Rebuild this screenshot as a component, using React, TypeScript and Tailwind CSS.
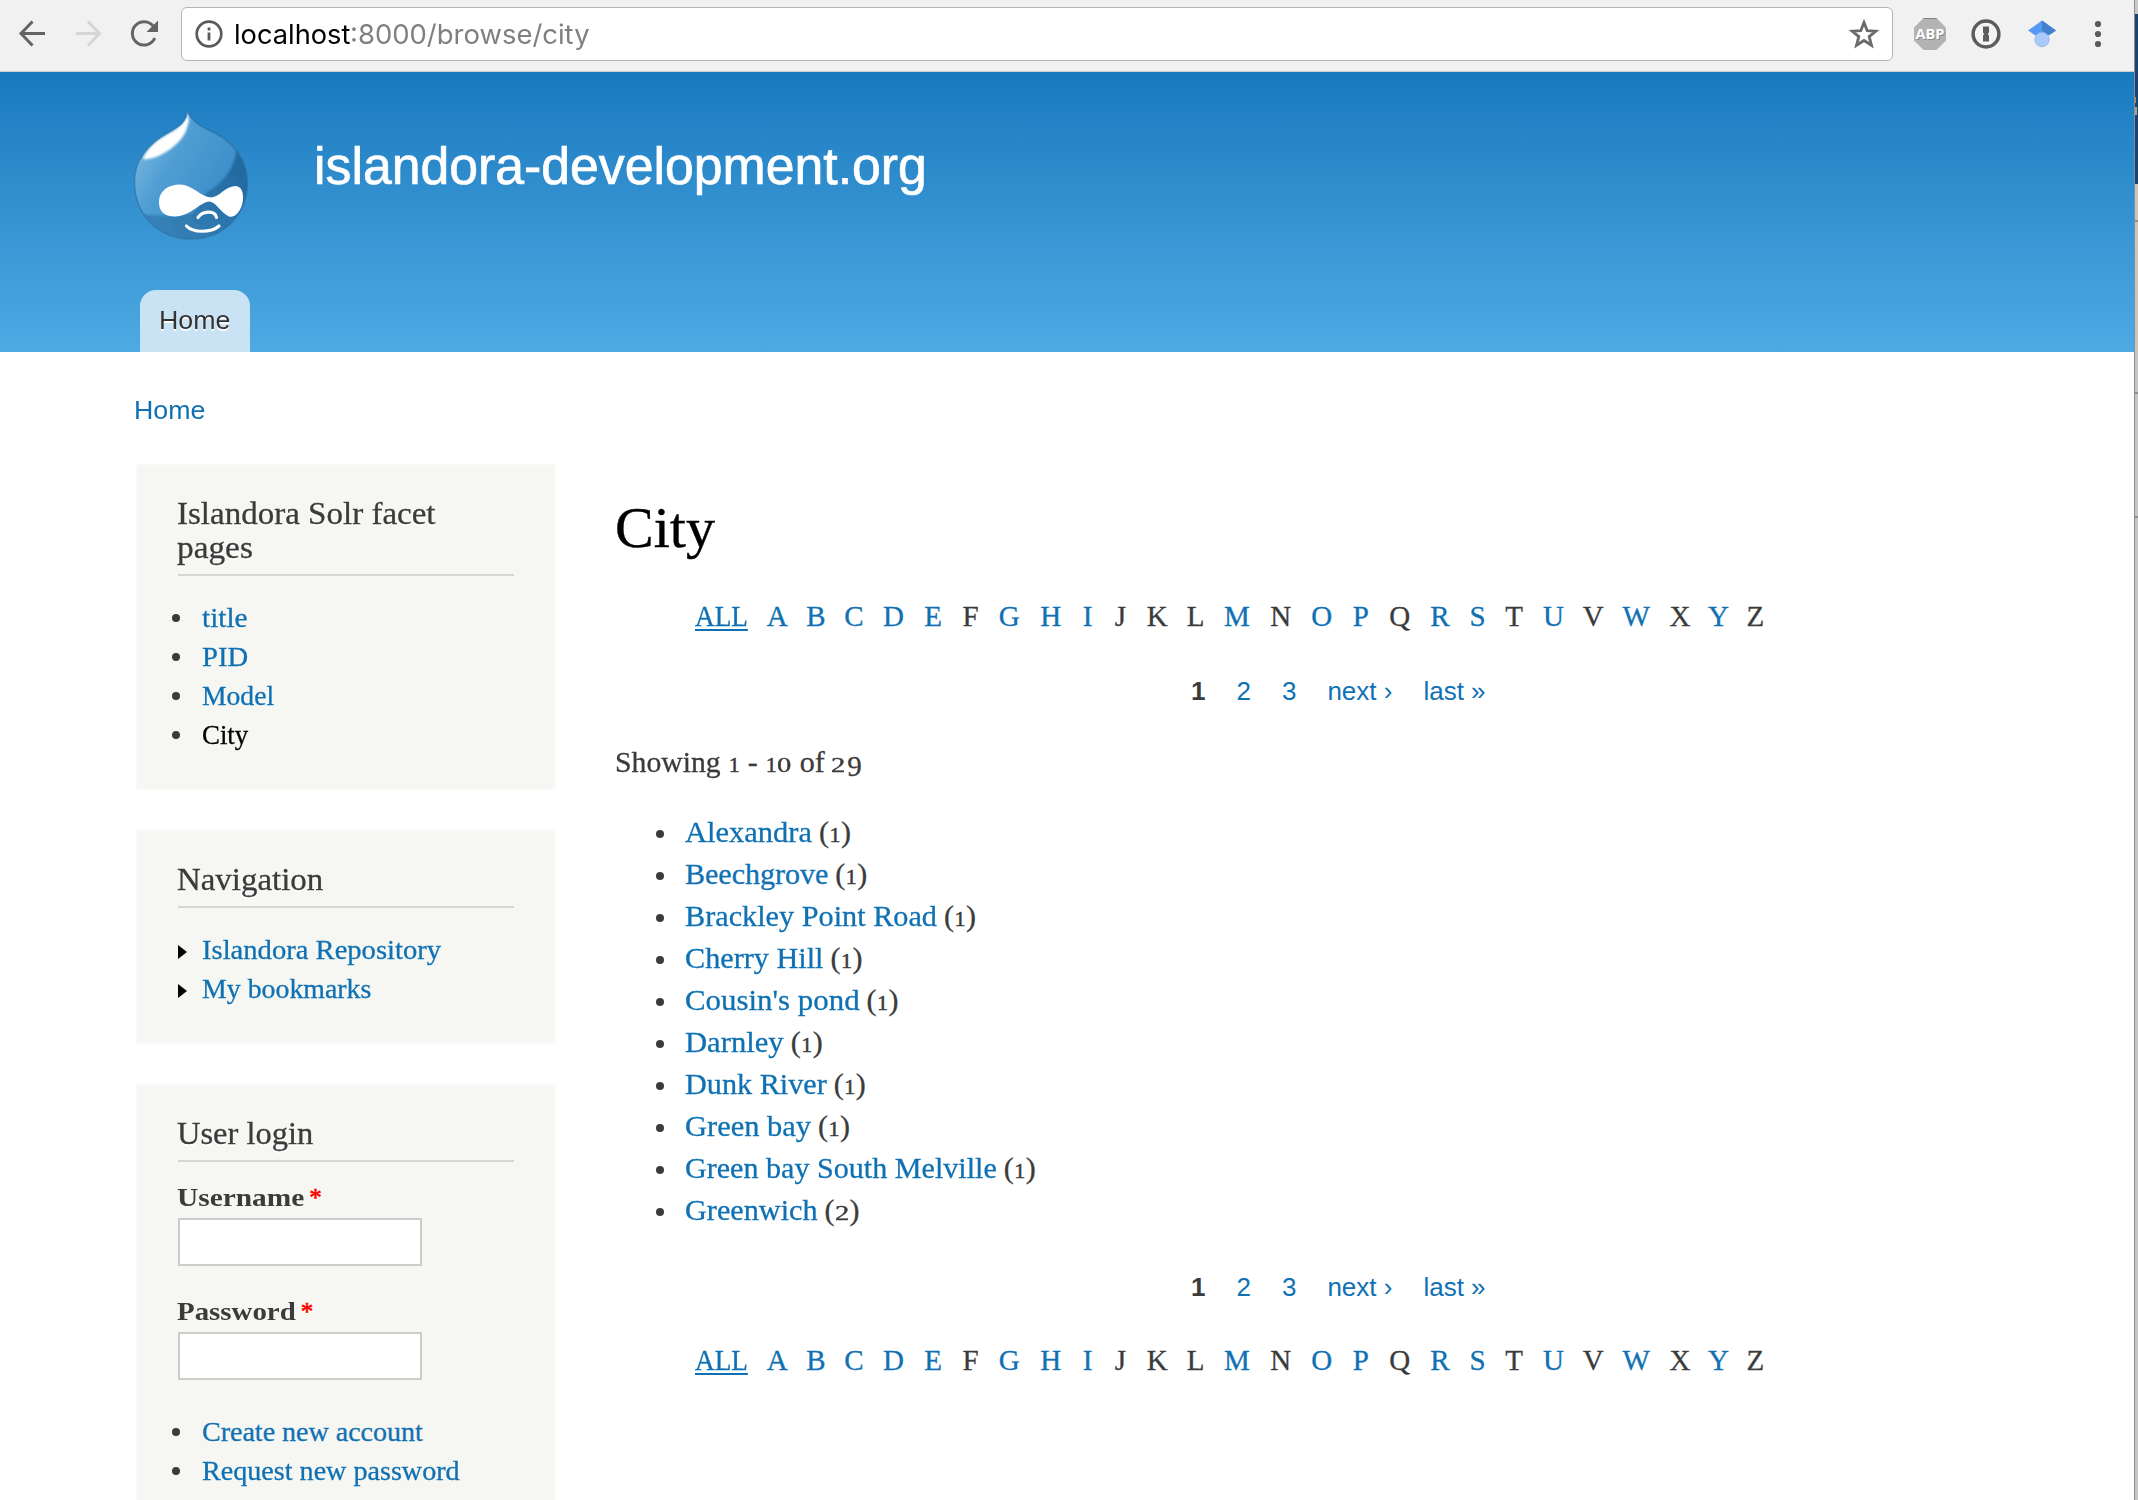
import React, { useLayoutEffect, useRef } from "react";

const SERIF = "font-['Liberation_Serif',serif]";
const SANS = "font-['Liberation_Sans',sans-serif]";

/** One line of text, stretched so that it fills the given width. */
function Fit({ text, width, className = "" }: { text: string; width: number; className?: string }) {
  const ref = useRef<HTMLSpanElement>(null);
  useLayoutEffect(() => {
    const el = ref.current;
    if (!el) return;
    const natural = el.offsetWidth;
    el.style.transform = `scaleX(${width / natural})`;
    el.style.marginRight = `${width - natural}px`;
  }, [text, width]);
  return (
    <span ref={ref} className={`inline-block shrink-0 origin-left whitespace-nowrap ${className}`}>
      {text}
    </span>
  );
}

/** Old-style numerals: 0-2 at x-height, the others hanging below the baseline. */
function Num({ value }: { value: string }) {
  return (
    <>
      {value.split("").map((d, i) =>
        "012".includes(d) ? (
          <span
            key={i}
            className={
              d === "1"
                ? "inline-block w-[12px] text-center text-[22px] leading-none [-webkit-text-stroke:0.5px_currentColor]"
                : "inline-block w-[15px] origin-left scale-x-[1.3] text-[22px] leading-none [-webkit-text-stroke:0.4px_currentColor]"
            }
          >
            {d}
          </span>
        ) : (
          <span key={i} className="relative top-[4px] ml-px text-[29px] leading-none">
            {d}
          </span>
        ),
      )}
    </>
  );
}

function Toolbar() {
  return (
    <div className="flex h-[72px] shrink-0 items-start border-b border-[#cfcfcf] bg-[#f1f1f1]">
      <svg className="h-[70px] w-[181px] shrink-0" viewBox="0 0 181 70" fill="none">
        <g stroke="#646464" strokeWidth="3">
          <path d="M45 33.5H21.5M32.5 21.5L21 33.5L32.5 45.5" />
          <path d="M76 33.5h23.5M88 21.5L99.500 33.5L88 45.5" stroke="#d6d6d6" />
          <path d="M153.300 26.200A11.700 11.700 0 1 0 154.800 38" />
        </g>
        <path d="M158 20.500V32H146.500Z" fill="#646464" />
      </svg>
      <div className="mt-[7px] flex h-[54px] w-[1712px] shrink-0 items-center rounded-[6px] border border-[#b4b4b4] bg-white">
        <svg className="ml-[13px] h-[28px] w-[28px]" viewBox="0 0 28 28" fill="none">
          <circle cx="14" cy="14" r="12.300" stroke="#5a5a5a" strokeWidth="2.700" />
          <path d="M12.600 12.500h2.800v8h-2.800zM12.600 7.500h2.800v3h-2.800z" fill="#5a5a5a" />
        </svg>
        <div className="mt-[2px] ml-[11px] flex text-[27px] leading-[40px] font-['Inter',sans-serif]">
          <Fit text="localhost" width={116} className="text-black" />
          <Fit text=":8000/browse/city" width={240} className="text-[#808080]" />
        </div>
        <svg className="mr-[12px] ml-auto h-[32px] w-[32px]" viewBox="0 0 32 32" fill="none">
          <path
            d="M16 4.500L19.200 12.700L27.800 13.200L21.200 18.600L23.500 27.300L16 22.500L8.500 27.300L10.800 18.600L4.200 13.200L12.800 12.700Z"
            stroke="#6a6a6a"
            strokeWidth="2.800"
          />
        </svg>
      </div>
      <div className="flex h-[68px] flex-1 items-center">
        <div className="relative ml-[21px] flex h-[32px] w-[32px] items-center justify-center">
          <svg className="absolute inset-0 h-[32px] w-[32px]" viewBox="0 0 32 32">
            <path d="M9.500 0h13L32 9.500v13L22.500 32h-13L0 22.500v-13Z" fill="#b3b3b3" />
            <path d="M9.500 .5h13" stroke="#858585" />
          </svg>
          <span className="relative text-[14.5px] leading-[24px] font-bold text-white [text-shadow:1px_1px_0_#8a8a8a] font-['Open_Sans',sans-serif]">
            ABP
          </span>
        </div>
        <svg className="ml-[25px] h-[30px] w-[30px]" viewBox="0 0 30 30">
          <circle cx="15" cy="15" r="12.900" fill="#f4f4f4" stroke="#5c5c5c" strokeWidth="3.500" />
          <path d="M12 7.500h6v6l-1.200 1.500L18 16.500v6h-6v-6l1.200-1.500L12 13.500Z" fill="#5c5c5c" />
        </svg>
        <svg className="ml-[27px] h-[28px] w-[28px]" viewBox="0 0 28 28">
          <path d="M14 .5L0 10.500L7 15.200h14L28 10.500Z" fill="#5599f2" />
          <path d="M14 .5L28 10.500L21 15.200L14 11Z" fill="#4480cc" />
          <circle cx="14" cy="19.500" r="7.200" fill="#a9cbfb" stroke="#86aeea" strokeWidth=".8" />
        </svg>
        <svg className="ml-[38px] h-[28px] w-[8px]" viewBox="0 0 8 28" fill="#5a5a5a">
          <circle cx="4" cy="4" r="3.100" />
          <circle cx="4" cy="14" r="3.100" />
          <circle cx="4" cy="24" r="3.100" />
        </svg>
      </div>
    </div>
  );
}

function Druplicon() {
  return (
    <svg className="h-[132px] w-[116px]" viewBox="0 0 116 132">
      <defs>
        <linearGradient id="drop" x1="0.1" y1="0.3" x2="0.7" y2="0.7">
          <stop offset="0" stopColor="#6fb2dd" />
          <stop offset="0.35" stopColor="#4f9dd3" />
          <stop offset="1" stopColor="#3d8fca" />
        </linearGradient>
        <linearGradient id="shade" x1="0" y1="1" x2="1" y2="0.2">
          <stop offset="0" stopColor="#3a87bd" />
          <stop offset="1" stopColor="#21689f" />
        </linearGradient>
        <filter id="soft" x="-20%" y="-20%" width="140%" height="140%">
          <feGaussianBlur stdDeviation="1" />
        </filter>
        <clipPath id="dropClip">
          <path d="M54.500 1.500C57 10 64 15.500 74 20.500C99 30 114.500 50 114.500 74C114.500 107 89 130 58 130C27 130 1.500 107 1.500 73C1.500 49 16 34 36 23C47 17 53 13 54.500 1.500Z" />
        </clipPath>
      </defs>
      <g clipPath="url(#dropClip)">
        <rect width="116" height="132" fill="url(#drop)" />
        <path d="M104 38C102 60 90 74 74 83L60 104C40 108 22 107 8 105L20 132H116V38Z" fill="url(#shade)" filter="url(#soft)" />
        <path d="M54 0C55 11 49 17 37 24C22 32 14 40 10 50C22 52 46 38 53 22L56 12Z" fill="#fff" filter="url(#soft)" />
      </g>
      <path
        d="M54.500 1.500C57 10 64 15.500 74 20.500C99 30 114.500 50 114.500 74C114.500 107 89 130 58 130C27 130 1.500 107 1.500 73C1.500 49 16 34 36 23C47 17 53 13 54.500 1.500Z"
        fill="none"
        stroke="#2c70a3"
        strokeOpacity=".65"
        strokeWidth="1.500"
      />
      <path
        d="M47 75.500C59 75.500 68 88 78 88.500C87 88 92 77 103 77C110 77.500 111.500 88 109 96C106.500 104 101 109 96 107.500C88 104 83 93 76.500 92.500C67 93 58 107 42 107.500C31 107.500 25.500 102 26 92C26.500 82 35 75.500 47 75.500Z"
        fill="#fff"
      />
      <g fill="none" stroke="#fff" strokeWidth="3.200" strokeLinecap="round">
        <path d="M65 108.500C69 102 82 100.500 83.500 108.500" />
        <path d="M53.500 117C60 124 78 124 86 117" />
      </g>
    </svg>
  );
}

function Header() {
  return (
    <header className="flex h-[280px] shrink-0 flex-col justify-between bg-linear-to-b from-[#177abf] to-[#4eaae3]">
      <div className="flex pt-[37px] pl-[133px]">
        <Druplicon />
        <div className={`mt-[28px] ml-[65px] text-[51px] leading-[60px] text-white ${SANS}`}>
          <Fit text="islandora-development.org" width={613} className="[-webkit-text-stroke:0.7px_white]" />
        </div>
      </div>
      <nav className="pl-[140px]">
        <div
          className={`flex h-[62px] w-[110px] justify-center rounded-t-[16px] bg-[#c9e3f5] pt-[10px] text-[26px] leading-[40px] text-[#333] [text-shadow:0_2px_1px_#fff] ${SANS}`}
        >
          <Fit text="Home" width={71} />
        </div>
      </nav>
    </header>
  );
}

function Block({ title, className, children }: { title: [string, number][]; className: string; children: React.ReactNode }) {
  return (
    <section className={`w-[420px] shrink-0 border-2 border-[#f9f9f9] bg-[#f6f6f2] px-[40px] pt-[30px] ${className}`}>
      <h2 className="flex flex-col border-b-2 border-[#d6d6d6] pb-[10px] text-[32px] leading-[34px] [-webkit-text-stroke:0.3px_currentColor] [text-shadow:0_2px_0_#fff]">
        {title.map(([t, w]) => (
          <Fit key={t} text={t} width={w} className="-ml-px self-start" />
        ))}
      </h2>
      {children}
    </section>
  );
}

function Links({ items, arrow = false, className }: { items: [string, number][]; arrow?: boolean; className: string }) {
  return (
    <ul className={`text-[28px] leading-[39px] [-webkit-text-stroke:0.3px_currentColor] ${className}`}>
      {items.map(([t, w]) => (
        <li key={t} className="flex h-[39px] items-center">
          {arrow ? (
            <svg className="mt-[5px] mr-[15px] h-[14px] w-[9px] text-black" viewBox="0 0 9 14">
              <path d="M0 0L9 7L0 14Z" />
            </svg>
          ) : (
            <span className="mr-[22px] -ml-[6px] h-[8px] w-[8px] rounded-full bg-[#3b3b3b]" />
          )}
          <Fit text={t} width={w} className={t === "City" ? "text-black" : "text-[#0f71b3]"} />
        </li>
      ))}
    </ul>
  );
}

function Field({ label, width, className }: { label: string; width: number; className: string }) {
  return (
    <div className={className}>
      <label className="flex text-[25px] leading-[30px] font-bold">
        <Fit text={label} width={width} className="-ml-px" />
        <span className="ml-[5px] font-normal text-[#f00] [-webkit-text-stroke:0.6px_#f00]">*</span>
      </label>
      <div className="mt-[5px] h-[48px] w-[244px] border-2 border-[#ccc] bg-white" />
    </div>
  );
}

function Sidebar() {
  return (
    <aside className="flex w-[420px] flex-col gap-[40px]">
      <Block title={[["Islandora Solr facet", 259], ["pages", 76]]} className="h-[326px]">
        <Links className="mt-[22px]" items={[["title", 46], ["PID", 46], ["Model", 72], ["City", 46]]} />
      </Block>
      <Block title={[["Navigation", 146]]} className="h-[214px]">
        <Links arrow className="mt-[22px]" items={[["Islandora Repository", 239], ["My bookmarks", 169]]} />
      </Block>
      <Block title={[["User login", 136]]} className="h-[460px]">
        <Field label="Username" width={127} className="mt-[21px]" />
        <Field label="Password" width={119} className="mt-[31px]" />
        <Links className="mt-[32px]" items={[["Create new account", 221], ["Request new password", 258]]} />
      </Block>
    </aside>
  );
}

/* Letter, cell width, linked. */
const LETTERS: [string, number, boolean][] = [
  ["A", 18.8, true], ["B", 18.3, true], ["C", 18, true], ["D", 21, true], ["E", 18.3, true],
  ["F", 16.8, false], ["G", 20.3, true], ["H", 22.8, true], ["I", 10.9, true], ["J", 14.5, false],
  ["K", 19.5, false], ["L", 16.9, false], ["M", 26, true], ["N", 21.5, false], ["O", 20.8, true],
  ["P", 17.1, true], ["Q", 20.8, false], ["R", 19.7, true], ["S", 15.7, true], ["T", 17.3, false],
  ["U", 21.2, true], ["V", 18.6, false], ["W", 27.4, true], ["X", 19.9, false], ["Y", 17.2, true],
  ["Z", 16.8, false],
];

function Alphabet({ className }: { className: string }) {
  return (
    <div
      className={`flex gap-[20px] pl-[80px] text-[29px] leading-[40px] [-webkit-text-stroke:0.3px_currentColor] ${className}`}
    >
      <Fit
        text="ALL"
        width={52.5}
        className="text-[#0f71b3] underline decoration-2 underline-offset-[3px] [text-decoration-skip-ink:none]"
      />
      {LETTERS.map(([l, w, link]) => (
        <span key={l} style={{ width: w }} className={`flex justify-center ${link ? "text-[#0f71b3]" : ""}`}>
          {l}
        </span>
      ))}
    </div>
  );
}

function Pager({ className }: { className: string }) {
  return (
    <div className={`flex gap-[31px] pl-[576px] text-[26px] leading-[40px] text-[#0f71b3] ${SANS} ${className}`}>
      <b className="text-[#3b3b3b]">1</b>
      <span>2</span>
      <span>3</span>
      <span>next ›</span>
      <span>last »</span>
    </div>
  );
}

const CITIES: [string, number, string][] = [
  ["Alexandra", 127, "1"],
  ["Beechgrove", 143, "1"],
  ["Brackley Point Road", 252, "1"],
  ["Cherry Hill", 138, "1"],
  ["Cousin's pond", 175, "1"],
  ["Darnley", 99, "1"],
  ["Dunk River", 142, "1"],
  ["Green bay", 126, "1"],
  ["Green bay South Melville", 312, "1"],
  ["Greenwich", 133, "2"],
];

function Main() {
  return (
    <main className="ml-[59px] flex flex-1 flex-col">
      <h1 className="mt-[29px] text-[58px] leading-[70px] text-black [-webkit-text-stroke:0.4px_currentColor]">
        <Fit text="City" width={100} />
      </h1>
      <Alphabet className="mt-[33px]" />
      <Pager className="mt-[35px]" />
      <div className="mt-[30px] flex h-[42px] text-[30px] leading-[42px] whitespace-pre [-webkit-text-stroke:0.3px_currentColor]">
        <Fit text="Showing" width={106} />
        <p>
          {" "}
          <Num value="1" /> - <Num value="10" />
          {" "}
        </p>
        <Fit text="of" width={25} />
        <p className="-ml-px">
          {" "}
          <Num value="29" />
        </p>
      </div>
      <ul className="mt-[28px] text-[30px] leading-[42px] [-webkit-text-stroke:0.3px_currentColor]">
        {CITIES.map(([name, w, n]) => (
          <li key={name} className="flex h-[42px] items-center">
            <span className="mt-[4px] mr-[21px] ml-[41px] h-[8px] w-[8px] rounded-full bg-[#3b3b3b]" />
            <Fit text={name} width={w} className="text-[#0f71b3]" />
            <span className="ml-[7px]">
              (<Num value={n} />)
            </span>
          </li>
        ))}
      </ul>
      <Pager className="mt-[36px]" />
      <Alphabet className="mt-[33px]" />
    </main>
  );
}

export default function App() {
  return (
    <div className={`flex h-[1500px] w-[2138px] overflow-hidden bg-white text-[#3b3b3b] ${SERIF}`}>
      <div className="flex h-full w-[2134px] flex-col overflow-hidden">
        <Toolbar />
        <Header />
        <div className={`mt-[38px] ml-[134px] h-[40px] shrink-0 text-[26px] leading-[40px] text-[#0f71b3] ${SANS}`}>
          <Fit text="Home" width={71} />
        </div>
        <div className="mt-[34px] flex pl-[136px]">
          <Sidebar />
          <Main />
        </div>
      </div>
      <div className="flex h-full w-[4px] flex-col border-l border-[#8c8c8c] bg-[#c6c6c6]">
        <div className="h-[14px] bg-[#c9c9c9]" />
        <div className="flex h-[170px] flex-col bg-[#174473]">
          <div className="mt-[83px] h-[6px] w-px bg-[#b08468]" />
          <div className="mt-[4px] h-[8px] w-[2px] bg-[#a9a19c]" />
        </div>
        <div className="mt-[36px] h-[2px] bg-[#8f8f8f]" />
        <div className="mt-[170px] h-[2px] bg-[#8f8f8f]" />
        <div className="mt-[122px] h-[2px] bg-[#8f8f8f]" />
      </div>
    </div>
  );
}
